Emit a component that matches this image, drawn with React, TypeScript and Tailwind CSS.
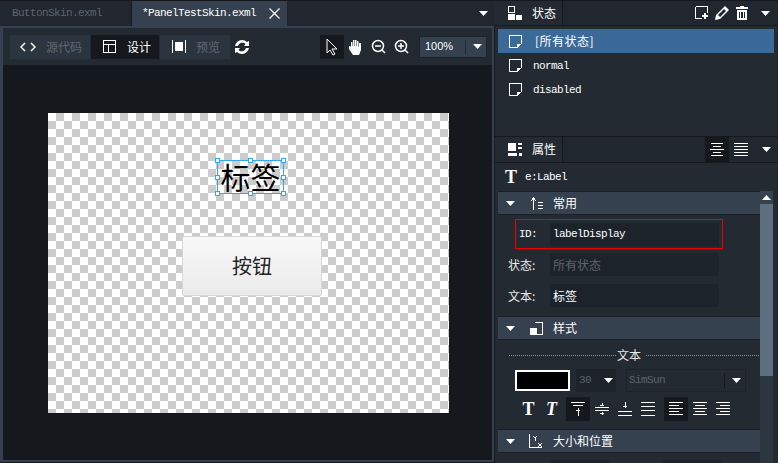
import React from 'react';

const cjk = "font-['SimSun','Noto_Sans_CJK_SC',sans-serif]";
const mono = "font-['Liberation_Mono','Noto_Sans_CJK_SC',monospace] text-[11px] tracking-[-0.6px]";

function Caret({ className = '' }: { className?: string }) {
  return (
    <svg width="9" height="5" viewBox="0 0 9 5" className={className}>
      <path d="M0 0h9L4.5 5z" fill="#fff" />
    </svg>
  );
}

function Icon({ w = 16, h = 16, children }: { w?: number; h?: number; children: React.ReactNode }) {
  return (
    <svg width={w} height={h} viewBox={`0 0 ${w} ${h}`} fill="none" stroke="#fff" strokeWidth="1" shapeRendering="crispEdges">
      {children}
    </svg>
  );
}

function NoteIcon() {
  return (
    <Icon w={13} h={13}>
      <path d="M.5.5h12v8l-4 4h-8z" />
      <path d="M8 9h4v1h-1v1h-1v1H9v1H8z" fill="#fff" stroke="none" />
    </Icon>
  );
}

function Lines({ rows }: { rows: [number, number][] }) {
  return (
    <Icon w={14} h={14}>
      {rows.map(([x, y], i) => (
        <path key={i} d={`M${x} ${y + 0.5}H${14 - x}`} />
      ))}
    </Icon>
  );
}

function SectionHeader({ icon, title }: { icon: React.ReactNode; title: string }) {
  return (
    <div className="flex h-[24px] items-center border-y border-[#1b2026] bg-[#35414f] text-white">
      <Caret className="ml-[8px]" />
      <span className="ml-[14px] flex w-[14px] justify-center">{icon}</span>
      <span className={`ml-[10px] text-[12px] ${cjk}`}>{title}</span>
    </div>
  );
}

function Field({ label, value, dim }: { label: string; value: string; dim?: boolean }) {
  return (
    <div className="ml-[10px] flex h-[23px] items-center">
      <span className={`w-[42px] text-[12px] text-[#e8e8e8] ${cjk}`}>{label}</span>
      <div className={`flex h-[23px] w-[169px] items-center bg-[#1d232b] pl-[3px] text-[12px] ${cjk} ${dim ? 'text-[#5c646d]' : 'text-white'}`}>
        {value}
      </div>
    </div>
  );
}

function Handle({ className }: { className: string }) {
  return <span className={`absolute h-[5px] w-[5px] border border-[#35a7f0] bg-white ${className}`} />;
}

function EditorPane() {
  return (
    <div className="flex h-full w-[495px] flex-col">
      <div className="flex h-[26px] items-end border-t border-[#15191e] bg-[#20272f] shrink-0">
        <div className={`flex h-[25px] w-[132px] items-center border-r border-[#15191e] pl-[12px] text-[#5f666e] ${mono}`}>ButtonSkin.exml</div>
        <div className={`flex h-[25px] w-[155px] items-center bg-[#35414f] pl-[10px] text-white ${mono}`}>
          *PanelTestSkin.exml
          <svg width="11" height="11" viewBox="0 0 11 11" className="ml-[13px]" stroke="#fff" strokeWidth="1.2">
            <path d="M.5.5l10 10M10.5.5l-10 10" />
          </svg>
        </div>
        <div className="flex flex-1 justify-end self-center pr-[7px]">
          <Caret />
        </div>
      </div>
      <div className="flex min-h-0 flex-1 flex-col border-y-[2px] border-r-[2px] border-l-[3px] border-[#35414f] mb-[1px] mr-[1px]">
        <div className="flex h-[37px] shrink-0 items-center bg-[#232a32] pl-[7px]">
          <div className="flex h-[24px] w-[80px] items-center bg-[#2b3540] pl-[10px]">
            <svg width="16" height="10" viewBox="0 0 16 10" fill="none" stroke="#fff" strokeWidth="1.5">
              <path d="M5 1L1 5l4 4M11 1l4 4-4 4" />
            </svg>
            <span className={`ml-[10px] text-[12px] text-[#60676f] ${cjk}`}>源代码</span>
          </div>
          <div className="ml-[1px] flex h-[24px] w-[68px] items-center bg-[#15191e] pl-[12px]">
            <Icon w={13} h={13}>
              <path d="M.5.5h12v12H.5zM.5 4.5h12M5.5 4.5v8" />
            </Icon>
            <span className={`ml-[11px] text-[12px] text-white ${cjk}`}>设计</span>
          </div>
          <div className="ml-[1px] flex h-[24px] w-[70px] items-center bg-[#2b3540] pl-[12px]">
            <svg width="14" height="13" viewBox="0 0 14 13" shapeRendering="crispEdges">
              <path d="M0 0h1v13H0zM13 0h1v13h-1zM3 2h8v9H3z" fill="#fff" />
            </svg>
            <span className={`ml-[10px] text-[12px] text-[#60676f] ${cjk}`}>预览</span>
          </div>
          <svg width="16" height="14" viewBox="0 0 16 14" className="ml-[4px]" fill="#fff">
            <path d="M8 0a7 7 0 0 1 5 2l2-1v5h-5l1.500-2A4.500 4.500 0 0 0 4 6H1a7 7 0 0 1 7-6z" />
            <path d="M8 14a7 7 0 0 1-5-2l-2 1V8h5l-1.500 2A4.500 4.500 0 0 0 12 8h3a7 7 0 0 1-7 6z" />
          </svg>
          <div className="ml-[70px] flex h-[24px] w-[24px] items-center justify-center bg-[#15191e]">
            <svg width="12" height="18" viewBox="0 0 12 18" fill="#15191e" stroke="#fff">
              <path d="M1 1v14l3-3 3 5 2-1-3-5h5z" />
            </svg>
          </div>
          <svg width="14" height="16" viewBox="0 0 14 16" fill="#fff" className="ml-[4px]">
            <path d="M3 8V3h1.500v4H5V1h1.500v6H7V1h1.500v6H9V2h1.500v6H11V4h2v7l-2 5H5L1 10V7h1z" />
          </svg>
          <svg width="15" height="15" viewBox="0 0 15 15" fill="none" stroke="#fff" strokeWidth="1.5" className="ml-[9px]">
            <circle cx="7" cy="7" r="5.500" />
            <path d="M4 7h6M11 11l3 3" />
          </svg>
          <svg width="15" height="15" viewBox="0 0 15 15" fill="none" stroke="#fff" strokeWidth="1.5" className="ml-[8px]">
            <circle cx="7" cy="7" r="5.500" />
            <path d="M4 7h6M7 4v6M11 11l3 3" />
          </svg>
          <div className="ml-[10px] flex h-[22px] w-[68px] items-center border border-[#1d232b] bg-[#35414f] text-[#fff]">
            <span className="w-[45px] pl-[5px] font-['Liberation_Sans',sans-serif] text-[11px]">100%</span>
            <span className="h-[14px] w-px bg-[#232a32]" />
            <Caret className="ml-[7px]" />
          </div>
        </div>
        <div className="relative min-h-0 flex-1 bg-[#15191e] pl-[45px] pt-[48px]">
          <div className="relative h-[300px] w-[401px] bg-[repeating-conic-gradient(#cccccc_0_25%,#ffffff_0_50%)] bg-[length:16px_16px]">
            <div className={`absolute left-[169px] top-[47px] flex h-[34px] w-[67px] items-center justify-center border border-[#35a7f0] pb-[3px] text-[30px] leading-none text-black ${cjk}`}>
              标签
              <Handle className="-left-[3px] -top-[3px]" />
              <Handle className="left-[30px] -top-[3px]" />
              <Handle className="-right-[3px] -top-[3px]" />
              <Handle className="-left-[3px] top-[14px]" />
              <Handle className="-right-[3px] top-[14px]" />
              <Handle className="-left-[3px] -bottom-[3px]" />
              <Handle className="left-[30px] -bottom-[3px]" />
              <Handle className="-right-[3px] -bottom-[3px]" />
            </div>
            <div className={`absolute left-[134px] top-[123px] flex h-[60px] w-[140px] items-center justify-center rounded-[2px] border border-[#d6d6d6] bg-gradient-to-b from-[#f8f8f8] to-[#ebebeb] pb-[1px] text-[20px] text-[#222] ${cjk}`}>
              按钮
            </div>
          </div>
        </div>
      </div>
    </div>
  );
}

function StatesPanel() {
  return (
    <div className="flex h-[137px] shrink-0 flex-col border-b border-[#15191e]">
      <div className="flex h-[26px] shrink-0 items-center border-y border-[#15191e] bg-[#20272f]">
        <div className="flex h-full w-[68px] items-center border-r border-[#15191e] bg-[#232a32] pl-[13px]">
          <svg width="14" height="14" viewBox="0 0 14 14" shapeRendering="crispEdges">
            <path d="M.5.5h6v6h-6z" fill="none" stroke="#fff" />
            <path d="M0 8h7v6H0zM8 9h6v5H8z" fill="#fff" />
          </svg>
          <span className={`ml-[10px] text-[12px] text-white ${cjk}`}>状态</span>
        </div>
        <div className="ml-auto flex items-center pr-[8px]">
          <Icon w={14} h={14}>
            <path d="M.5.5h12v6M.5.5v12h6" />
            <path d="M9 7h2v2h2v2h-2v2H9v-2H7V9h2z" fill="#fff" stroke="none" />
          </Icon>
          <svg width="14" height="14" viewBox="0 0 14 14" fill="#fff" className="ml-[6px]">
            <path d="M10 0l4 4-9 9-5 1 1-5zM9 3L3 9l2 2 6-6z" />
          </svg>
          <svg width="12" height="14" viewBox="0 0 12 14" fill="#fff" className="ml-[7px]" shapeRendering="crispEdges">
            <path d="M4 0h4v1h4v2H0V1h4zM1 4h10v10H1zM3 6v6h1V6zm2 0v6h2V6zm3 0v6h1V6z" fillRule="evenodd" />
          </svg>
          <Caret className="ml-[13px]" />
        </div>
      </div>
      <div className="pl-[3px] pr-[4px] pt-[3px]">
        <div className="flex h-[24px] items-center bg-[#3b6a99] pl-[11px] text-white">
          <NoteIcon />
          <span className={`ml-[13px] text-[12px] tracking-[0.5px] ${cjk}`}>[所有状态]</span>
        </div>
        {['normal', 'disabled'].map(name => (
          <div key={name} className="flex h-[24px] items-center pl-[11px] text-white">
            <NoteIcon />
            <span className={`ml-[11px] pt-[2px] ${mono}`}>{name}</span>
          </div>
        ))}
      </div>
    </div>
  );
}

function PropsPanel() {
  return (
    <div className="flex min-h-0 flex-1 flex-col">
      <div className="flex h-[26px] shrink-0 items-center border-b border-[#15191e] bg-[#20272f]">
        <div className="flex h-full w-[68px] items-center border-r border-[#15191e] bg-[#232a32] pb-[1px] pl-[13px]">
          <svg width="14" height="13" viewBox="0 0 14 13" fill="#fff" shapeRendering="crispEdges">
            <path d="M0 0h8v8H0zM10 0h4v2h-4zM10 4h4v2h-4zM0 10h9v3H0zM11 10h3v3h-3z" />
          </svg>
          <span className={`ml-[10px] text-[12px] text-white ${cjk}`}>属性</span>
        </div>
        <div className="ml-auto flex h-full items-center">
          <div className="flex h-[25px] w-[24px] items-center justify-center bg-[#15191e]">
            <Lines rows={[[1, 0], [3, 3], [0, 6], [3, 9], [1, 12]]} />
          </div>
          <div className="flex h-[25px] w-[24px] items-center justify-center">
            <Lines rows={[[0, 0], [0, 3], [0, 6], [0, 9], [0, 12]]} />
          </div>
          <Caret className="ml-[9px] mr-[7px]" />
        </div>
      </div>
      <div className="flex h-[28px] shrink-0 items-center pl-[10px] text-white">
        <span className="font-['Liberation_Serif',serif] text-[18px] font-bold leading-none">T</span>
        <span className={`ml-[8px] ${mono}`}>e:Label</span>
      </div>
      <div className="flex min-h-0 flex-1 overflow-hidden">
        <div className="ml-[3px] w-[262px] shrink-0">
          <SectionHeader
            title="常用"
            icon={
              <Icon w={13} h={13}>
                <path d="M3.500 1v12M1 4l2.500-3L6 4M8 5h5M8 8h5M8 11h5" />
              </Icon>
            }
          />
          <div className="ml-[17px] mt-[4px] flex h-[30px] w-[208px] items-center border border-[#f00000]">
            <span className={`w-[34px] pl-[3px] text-white ${mono}`}>ID:</span>
            <div className={`flex h-[23px] w-[169px] items-center bg-[#1d232b] pl-[3px] text-white ${mono}`}>labelDisplay</div>
          </div>
          <div className="mt-[4px]">
            <Field label="状态:" value="所有状态" dim />
          </div>
          <div className="mt-[8px]">
            <Field label="文本:" value="标签" />
          </div>
          <div className="mt-[9px]">
            <SectionHeader
              title="样式"
              icon={
                <Icon w={13} h={13}>
                  <path d="M4.500.5h8v12h-7" />
                  <path d="M0 6h7v7H0z" fill="#fff" stroke="none" />
                </Icon>
              }
            />
          </div>
          <div className="mt-[7px] flex h-[16px] items-center">
            <span className="ml-[11px] w-[107px] border-t border-dotted border-[#8a9097]" />
            <span className={`pl-[1px] pr-[5px] text-[12px] text-[#e8e8e8] ${cjk}`}>文本</span>
            <span className="mr-[1px] flex-1 border-t border-dotted border-[#8a9097]" />
          </div>
          <div className="ml-[17px] mt-[6px] flex items-center">
            <div className="h-[21px] w-[55px] border-2 border-white bg-black" />
            <div className={`ml-[6px] flex h-[23px] w-[40px] items-center bg-[#1d232b] pl-[3px] text-[#5c646d] ${mono}`}>
              <span className="w-[25px]">30</span>
              <Caret />
            </div>
            <div className={`ml-[10px] flex h-[23px] w-[120px] items-center border border-[#1d232b] bg-[#232a32] pl-[2px] text-[#5c646d] ${mono}`}>
              <span className="w-[95px]">SimSun</span>
              <span className="h-[15px] w-px bg-[#15191e]" />
              <Caret className="ml-[7px]" />
            </div>
          </div>
          <div className="ml-[19px] mt-[5px] flex h-[24px] items-center text-white">
            <span className="flex w-[23px] justify-center font-['Liberation_Serif',serif] text-[18px] font-bold leading-none">T</span>
            <span className="flex w-[23px] justify-center font-['Liberation_Serif',serif] text-[18px] font-bold italic leading-none">T</span>
            <div className="ml-[3px] flex h-[24px] w-[24px] items-center justify-center bg-[#15191e]">
              <Icon w={14} h={14}>
                <path d="M0 .5h14M2 3.500h10M7 6v8M5 8h4" />
              </Icon>
            </div>
            <div className="flex h-[24px] w-[23px] items-center justify-center">
              <Icon w={14} h={14}>
                <path d="M0 5.500h14M0 8.500h14M7 1v3M7 10v3M5 3h4M5 11h4" />
              </Icon>
            </div>
            <div className="flex h-[24px] w-[23px] items-center justify-center">
              <Icon w={14} h={14}>
                <path d="M7 0v6M5 4h4M0 9.500h14M0 13.500h14" />
              </Icon>
            </div>
            <div className="flex h-[24px] w-[23px] items-center justify-center">
              <Lines rows={[[0, 0], [0, 4], [0, 8], [0, 13]]} />
            </div>
            <div className="ml-[5px] flex h-[24px] w-[24px] items-center justify-center bg-[#15191e]">
              <Icon w={14} h={14}>
                <path d="M0 .5h14M0 3.500h10M0 6.500h14M0 9.500h10M0 12.500h14" />
              </Icon>
            </div>
            <div className="flex h-[24px] w-[23px] items-center justify-center">
              <Lines rows={[[0, 0], [2, 3], [0, 6], [2, 9], [0, 12]]} />
            </div>
            <div className="flex h-[24px] w-[23px] items-center justify-center">
              <Icon w={14} h={14}>
                <path d="M0 .5h14M4 3.500h10M0 6.500h14M4 9.500h10M0 12.500h14" />
              </Icon>
            </div>
          </div>
          <div className="mt-[8px]">
            <SectionHeader
              title="大小和位置"
              icon={
                <Icon w={14} h={14}>
                  <path d="M.5 0v13.500H13" />
                  <path d="M4 2l2 2 2-2M6 4v3M9 9l4 4M13 9l-4 4" />
                </Icon>
              }
            />
          </div>
          <div className="ml-[52px] mt-[7px] flex gap-[52px]">
            <div className="h-[20px] w-[60px] bg-[#1d232b]" />
            <div className="h-[20px] w-[60px] bg-[#1d232b]" />
          </div>
        </div>
        <div className="flex w-[13px] shrink-0 flex-col bg-[#2b3640]">
          <div className="flex h-[13px] shrink-0 items-center justify-center bg-[#35414f]">
            <Caret className="rotate-180" />
          </div>
          <div className="h-[172px] shrink-0 bg-[#5c6e80]" />
        </div>
      </div>
    </div>
  );
}

export default function App() {
  return (
    <div className="flex h-[463px] w-[778px] overflow-hidden bg-[#15191e]">
      <EditorPane />
      <div className="flex h-full w-[283px] flex-col bg-[#232a32]">
        <StatesPanel />
        <PropsPanel />
      </div>
    </div>
  );
}
